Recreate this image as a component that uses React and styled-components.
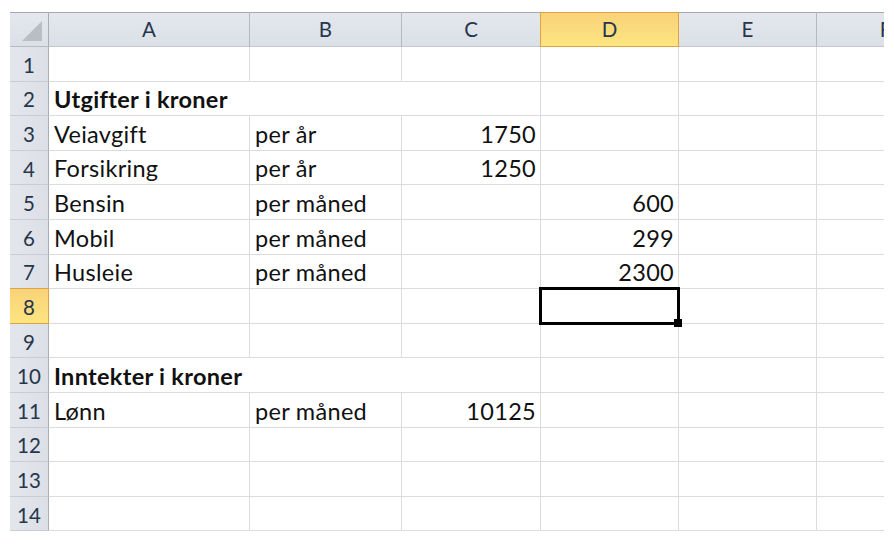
import React from 'react'
import styled, { createGlobalStyle } from 'styled-components'

const GlobalStyle = createGlobalStyle`
  html, body {
    margin: 0;
    padding: 0;
    background: #ffffff;
  }
  body {
    font-family: Lato, "Liberation Sans", sans-serif;
  }
`

const columns = ['A', 'B', 'C', 'D', 'E', 'F']
const selectedCol = 'D'
const selectedRow = 8

// row number -> cells keyed by column
const data = {
    2: { A: { text: 'Utgifter i kroner', bold: true, span: 3 } },
    3: { A: { text: 'Veiavgift' }, B: { text: 'per år' }, C: { text: '1750', num: true } },
    4: { A: { text: 'Forsikring' }, B: { text: 'per år' }, C: { text: '1250', num: true } },
    5: { A: { text: 'Bensin' }, B: { text: 'per måned' }, D: { text: '600', num: true } },
    6: { A: { text: 'Mobil' }, B: { text: 'per måned' }, D: { text: '299', num: true } },
    7: { A: { text: 'Husleie' }, B: { text: 'per måned' }, D: { text: '2300', num: true } },
    10: { A: { text: 'Inntekter i kroner', bold: true, span: 3 } },
    11: { A: { text: 'Lønn' }, B: { text: 'per måned' }, C: { text: '10125', num: true } },
}

function App() {
    const rows = Array.from({ length: 14 }, (_, i) => i + 1)

    return (
        <>
            <GlobalStyle />
            <Page>
                <Sheet>
                    <Corner>
                        <svg width="22" height="22" viewBox="0 0 22 22">
                            <polygon points="21,1 21,21 1,21" fill="#b9bec6" />
                        </svg>
                    </Corner>
                    {columns.map(c => (
                        <ColHeader key={c} active={c === selectedCol}>
                            <span>{c}</span>
                        </ColHeader>
                    ))}

                    {rows.map(r => {
                        const rowData = data[r] || {}
                        const out = [
                            <RowHeader key={'h' + r} active={r === selectedRow}>{r}</RowHeader>
                        ]
                        let skip = 0
                        columns.forEach(c => {
                            if (skip > 0) { skip--; return }
                            const cell = rowData[c]
                            const span = cell && cell.span ? cell.span : 1
                            skip = span - 1
                            out.push(
                                <Cell key={c + r} span={span} num={cell && cell.num} bold={cell && cell.bold}>
                                    {cell ? cell.text : ''}
                                    {c === selectedCol && r === selectedRow && (
                                        <Selection>
                                            <Handle />
                                        </Selection>
                                    )}
                                </Cell>
                            )
                        })
                        return out
                    })}
                </Sheet>
            </Page>
        </>
    )
}

export default App

const Page = styled.div`
    width: 894px;
    height: 544px;
    overflow: hidden;
    padding: 12px 0 0 10px;
    box-sizing: border-box;
`

const Sheet = styled.div`
    display: grid;
    grid-template-columns: 39px 201px 152px 139px 138px 138px 138px;
    grid-template-rows: 35px repeat(14, 34.6px);
    width: 874px;
    overflow: hidden;
`

const HeaderBase = styled.div`
    box-sizing: border-box;
    display: flex;
    align-items: center;
    justify-content: center;
    font-size: 20.5px;
    color: #26364c;
    background: linear-gradient(#e4e8ee, #dbdfe6);
`

const Corner = styled(HeaderBase)`
    border-top: 1px solid #a4a8b0;
    border-right: 1px solid #a9aeb6;
    border-bottom: 1px solid #b7bcc4;
    justify-content: flex-end;
    align-items: flex-end;
    padding: 0 5px 4px 0;
`

const ColHeader = styled(HeaderBase)`
    border-top: 1px solid ${p => p.active ? '#e0a341' : '#a4a8b0'};
    border-right: 1px solid ${p => p.active ? '#e0a341' : '#b4b9c1'};
    border-left: ${p => p.active ? '1px solid #e0a341' : 'none'};
    border-bottom: 1px solid ${p => p.active ? '#e0a341' : '#c2c6cd'};
    background: ${p => p.active ? 'linear-gradient(#f9d27a, #fde57f)' : 'linear-gradient(#e4e8ee, #dbdfe6)'};
    margin-left: ${p => p.active ? '-1px' : '0'};
    padding-bottom: 1px;

    span {
        white-space: nowrap;
    }
`

const RowHeader = styled(HeaderBase)`
    border-right: 1px solid ${p => p.active ? '#e0a341' : '#a9aeb6'};
    border-bottom: 1px solid ${p => p.active ? '#e0a341' : '#c8ccd3'};
    border-top: ${p => p.active ? '1px solid #e0a341' : 'none'};
    margin-top: ${p => p.active ? '-1px' : '0'};
    background: ${p => p.active ? 'linear-gradient(#f9d27a, #fde57f)' : 'linear-gradient(90deg, #e3e6ec, #dcdfe6)'};
    padding-top: 2px;
`

const Cell = styled.div`
    position: relative;
    box-sizing: border-box;
    grid-column: span ${p => p.span};
    border-right: 1px solid #dadcdf;
    border-bottom: 1px solid #dadcdf;
    display: flex;
    align-items: flex-end;
    justify-content: ${p => p.num ? 'flex-end' : 'flex-start'};
    padding: 0 4px 3px 5px;
    font-size: 23.5px;
    letter-spacing: 0.3px;
    line-height: 26px;
    font-weight: ${p => p.bold ? 700 : 400};
    color: #111111;
    white-space: nowrap;
`

const Selection = styled.div`
    position: absolute;
    z-index: 2;
    left: -2px;
    top: -2px;
    right: -2px;
    bottom: -2px;
    border: 3px solid #000000;
`

const Handle = styled.div`
    position: absolute;
    right: -5px;
    bottom: -5px;
    width: 8px;
    height: 8px;
    background: #000000;
`
